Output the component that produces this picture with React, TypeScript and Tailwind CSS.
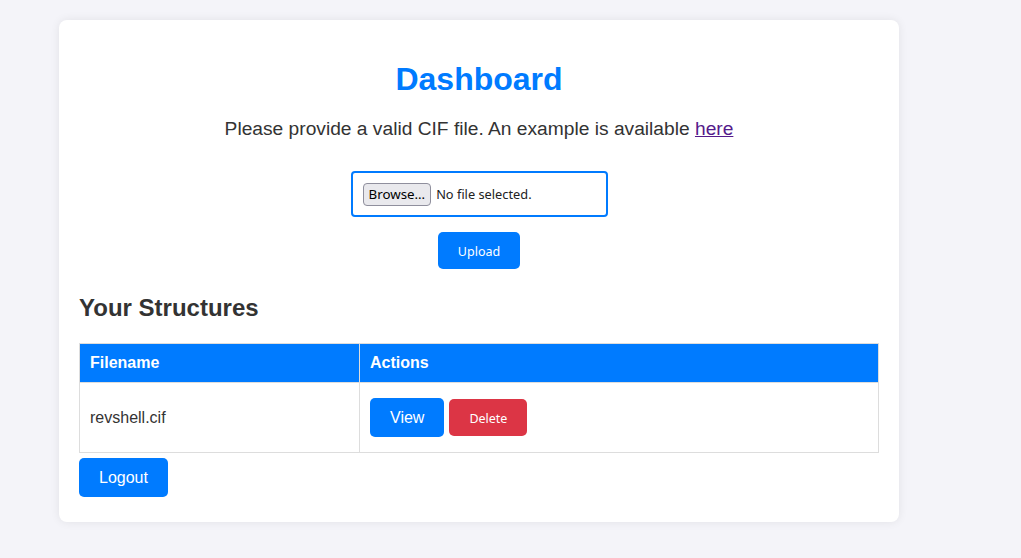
const btnFont = { fontFamily: '"Noto Sans", sans-serif' }

export default function App() {
  return (
    <div className="min-h-screen bg-[#f4f4f9] pt-[20px] pb-[36px]" style={{ fontFamily: '"Liberation Sans", Arial, sans-serif' }}>
      <div className="ml-[59px] w-[840px] rounded-[8px] bg-white px-[20px] pt-[20px] pb-[25px] text-[#333] shadow-[0_0_10px_rgba(0,0,0,0.08)]">
        <h1 className="mt-[21px] text-center text-[32px] leading-[37px] font-bold text-[#007bff]">Dashboard</h1>
        <p className="mt-[20px] text-center text-[19.2px] leading-[22px]">
          Please provide a valid CIF file. An example is available{' '}
          <a href="#" className="text-[#551a8b] underline">
            here
          </a>
        </p>

        <form className="mt-[31px] flex flex-col items-center">
          <label className="flex h-[46px] w-[257px] items-center rounded-[4px] border-2 border-[#007bff] pl-[10px]">
            <span
              className="flex h-[23px] items-center rounded-[4px] border border-[#8f8f9d] bg-[#e9e9ed] px-[5px] pt-[1px] text-[13.33px] text-black"
              style={btnFont}
            >
              Browse…
            </span>
            <span className="ml-[5px] pt-[1px] text-[12.8px] text-[#222]" style={btnFont}>
              No file selected.
            </span>
          </label>
          <button
            type="button"
            className="mt-[15px] h-[37px] rounded-[5px] bg-[#007bff] px-[20px] pt-[3px] text-[12.5px] text-white"
            style={btnFont}
          >
            Upload
          </button>
        </form>

        <h2 className="mt-[25px] text-[24px] leading-[28px] font-bold">Your Structures</h2>

        <table className="mt-[21px] w-full border-collapse text-[16px]">
          <thead>
            <tr>
              <th className="h-[39px] w-[280px] border border-[#ddd] bg-[#007bff] px-[10px] text-left font-bold text-white">Filename</th>
              <th className="h-[39px] border border-[#ddd] bg-[#007bff] px-[10px] text-left font-bold text-white">Actions</th>
            </tr>
          </thead>
          <tbody>
            <tr>
              <td className="h-[70px] border border-[#ddd] px-[10px]">revshell.cif</td>
              <td className="h-[70px] border border-[#ddd] px-[10px]">
                <div className="flex items-center gap-[5px]">
                  <button type="button" className="h-[39px] rounded-[5px] bg-[#007bff] px-[20px] text-[16px] text-white">
                    View
                  </button>
                  <button
                    type="button"
                    className="h-[37px] rounded-[5px] bg-[#dc3545] px-[20px] pt-[3px] text-[12.5px] text-white"
                    style={btnFont}
                  >
                    Delete
                  </button>
                </div>
              </td>
            </tr>
          </tbody>
        </table>

        <button type="button" className="mt-[5px] h-[39px] rounded-[5px] bg-[#007bff] px-[20px] text-[16px] text-white">
          Logout
        </button>
      </div>
    </div>
  )
}
